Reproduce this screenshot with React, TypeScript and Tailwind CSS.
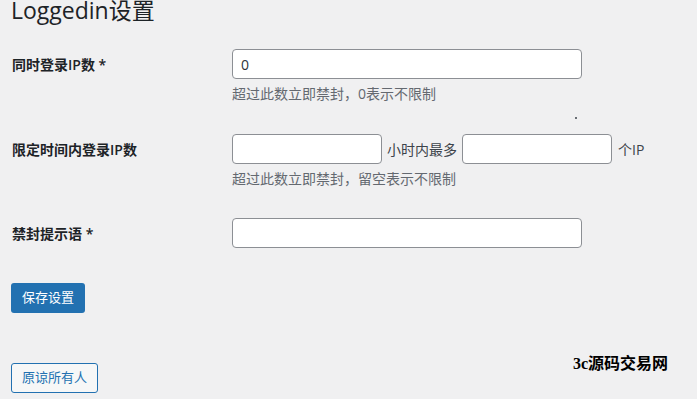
const font = "font-['Open_Sans','Noto_Sans_CJK_SC',sans-serif]";

const Field = ({ className = "", value = "" }: { className?: string; value?: string }) => (
  <input
    readOnly
    value={value}
    className={`h-[30px] rounded-[4px] border border-[#8c8f94] bg-white px-2 text-[14px] text-[#2c3338] outline-none ${className}`}
  />
);

const Row = ({
  label,
  children,
  desc,
}: {
  label: string;
  children: React.ReactNode;
  desc?: string;
}) => (
  <div className="flex">
    <div className="flex h-[30px] w-[221px] shrink-0 items-center pl-px text-[14px] font-semibold text-[#1d2327]">
      {label}
    </div>
    <div className="flex flex-col">
      <div className="flex items-center">{children}</div>
      {desc && (
        <p className="mt-[5px] text-[14px] leading-[20px] text-[#646970]">{desc}</p>
      )}
    </div>
  </div>
);

export default function App() {
  return (
    <div className={`relative h-[399px] w-[697px] overflow-hidden bg-[#f0f0f1] px-[11px] ${font}`}>
      <h1 className="h-[22px] text-[23px] leading-[20px] font-normal text-[#1d2327]">
        Loggedin设置
      </h1>

      <div className="mt-[27px] flex flex-col">
        <Row label="同时登录IP数 *" desc="超过此数立即禁封，0表示不限制">
          <Field className="w-[350px]" value="0" />
        </Row>

        <div className="mt-[30px]">
          <Row label="限定时间内登录IP数" desc="超过此数立即禁封，留空表示不限制">
            <Field className="w-[150px]" />
            <span className="mx-[5px] text-[14px] text-[#3c434a]">小时内最多</span>
            <Field className="w-[150px]" />
            <span className="ml-[6px] text-[14px] text-[#3c434a]">个IP</span>
          </Row>
        </div>

        <div className="mt-[29px]">
          <Row label="禁封提示语 *">
            <Field className="w-[350px]" />
          </Row>
        </div>
      </div>

      <button className="mt-[35px] block h-[30px] rounded-[3px] bg-[#2271b1] px-[11px] text-[13px] text-white">
        保存设置
      </button>

      <button className="mt-[50px] block h-[30px] rounded-[3px] border border-[#2271b1] bg-[#f6f7f7] px-[10px] text-[13px] text-[#2271b1]">
        原谅所有人
      </button>

      <span className="absolute left-[575px] top-[117px] h-[2px] w-[2px] rounded-full bg-[#3c434a]" />

      <span className="absolute left-[573px] top-[352px] font-['Liberation_Serif','Noto_Sans_CJK_SC',serif] text-[16px] font-bold text-black">
        3c源码交易网
      </span>
    </div>
  );
}
